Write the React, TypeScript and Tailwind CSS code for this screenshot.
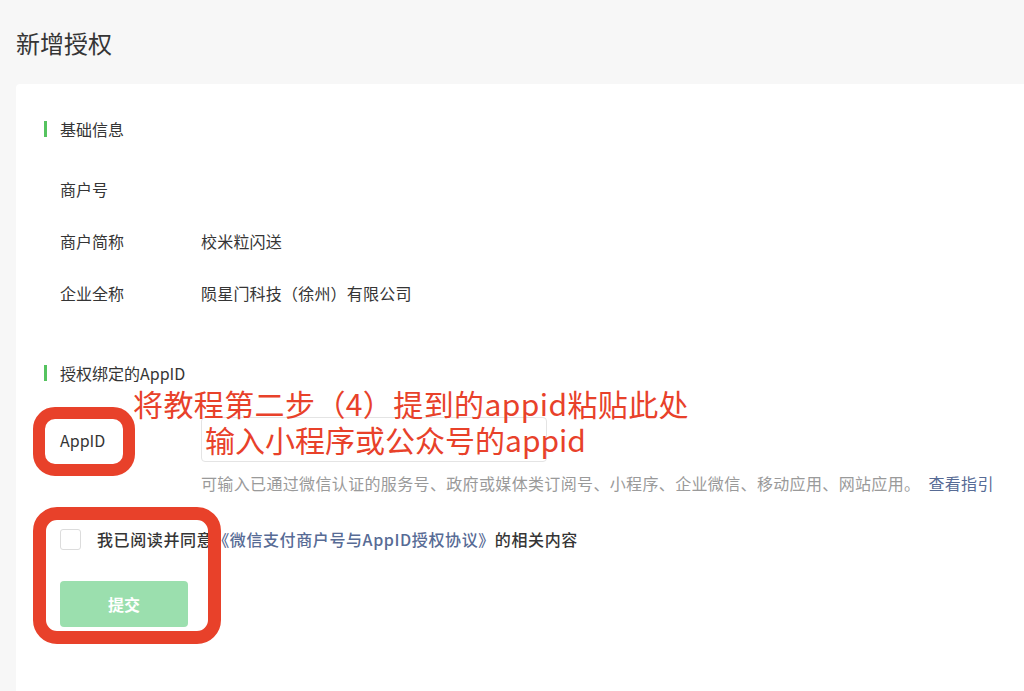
import { FC } from "react";

type InfoRow = {
  label: string;
  value: string;
};

const basicInfo: InfoRow[] = [
  { label: "商户号", value: "" },
  { label: "商户简称", value: "校米粒闪送" },
  { label: "企业全称", value: "陨星门科技（徐州）有限公司" },
];

const SectionTitle: FC<{ title: string }> = ({ title }) => (
  <div className="flex h-[18px] items-center">
    <span className="h-[16px] w-[3px] bg-[#55c35f]"></span>
    <span className="ml-[13px] text-[16px] leading-[18px] text-[#353535]">
      {title}
    </span>
  </div>
);

const App: FC = () => {
  return (
    <div
      className="relative h-[691px] overflow-hidden bg-[#f7f7f7]"
      style={{ fontFamily: '"Noto Sans CJK SC", "Noto Sans", sans-serif' }}
    >
      <h1 className="h-[84px] px-4 pt-[27px] text-[24px] leading-[32px] font-normal text-[#353535]">
        新增授权
      </h1>

      <div className="ml-4 mr-[-24px] min-h-[620px] rounded-[4px] bg-white pl-[28px] pt-[36px]">
        {/* 基础信息 */}
        <SectionTitle title="基础信息" />
        <div className="mt-[25px] pl-[16px]">
          {basicInfo.map((row) => (
            <div
              key={row.label}
              className="flex h-[52px] items-center text-[16px] text-[#353535]"
            >
              <span className="w-[141px]">{row.label}</span>
              <span className="tracking-[0.2px]">{row.value}</span>
            </div>
          ))}
        </div>

        {/* 授权绑定的AppID */}
        <div className="mt-[45px]">
          <SectionTitle title="授权绑定的AppID" />
        </div>
        <div className="mt-[35px] pl-[16px]">
          <div className="flex items-center">
            <span className="w-[141px] text-[16px] text-[#353535]">AppID</span>
            <input
              className="h-[45px] w-[346px] rounded-[4px] border border-[#e4e4e4] px-3 text-[16px] outline-none"
              type="text"
            />
          </div>
          <p className="mt-[10px] pl-[141px] text-[16px] leading-[22px] tracking-[0.35px] text-[#9a9a9a]">
            可输入已通过微信认证的服务号、政府或媒体类订阅号、小程序、企业微信、移动应用、网站应用。
            <a className="ml-[8px] text-[#576b95]" href="#">
              查看指引
            </a>
          </p>

          <label className="mt-[33px] flex items-center">
            <span className="h-[21px] w-[21px] rounded-[3px] border border-[#dcdcdc] bg-white"></span>
            <span className="ml-[16px] text-[16px] font-medium tracking-[0.6px] text-[#353535]">
              我已阅读并同意
              <a className="text-[#576b95]" href="#">
                《微信支付商户号与AppID授权协议》
              </a>
              的相关内容
            </span>
          </label>

          <button className="mt-[30px] h-[46px] w-[128px] rounded-[4px] bg-[#9bdfae] text-[16px] font-bold text-white">
            提交
          </button>
        </div>
      </div>

      {/* annotations */}
      <div className="absolute left-[33px] top-[407px] h-[69px] w-[102px] rounded-[22px] border-[12px] border-[#e8412a]"></div>
      <div className="absolute left-[33px] top-[507px] h-[137px] w-[188px] rounded-[24px] border-[13px] border-[#e8412a]"></div>
      <div className="absolute left-[133px] top-[384px] text-[30px] leading-[38px] tracking-[0.4px] text-[#e8412a]">
        将教程第二步（4）提到的appid粘贴此处
      </div>
      <div className="absolute left-[205px] top-[420px] text-[30px] leading-[38px] text-[#e8412a]">
        输入小程序或公众号的appid
      </div>
    </div>
  );
};

export default App;
